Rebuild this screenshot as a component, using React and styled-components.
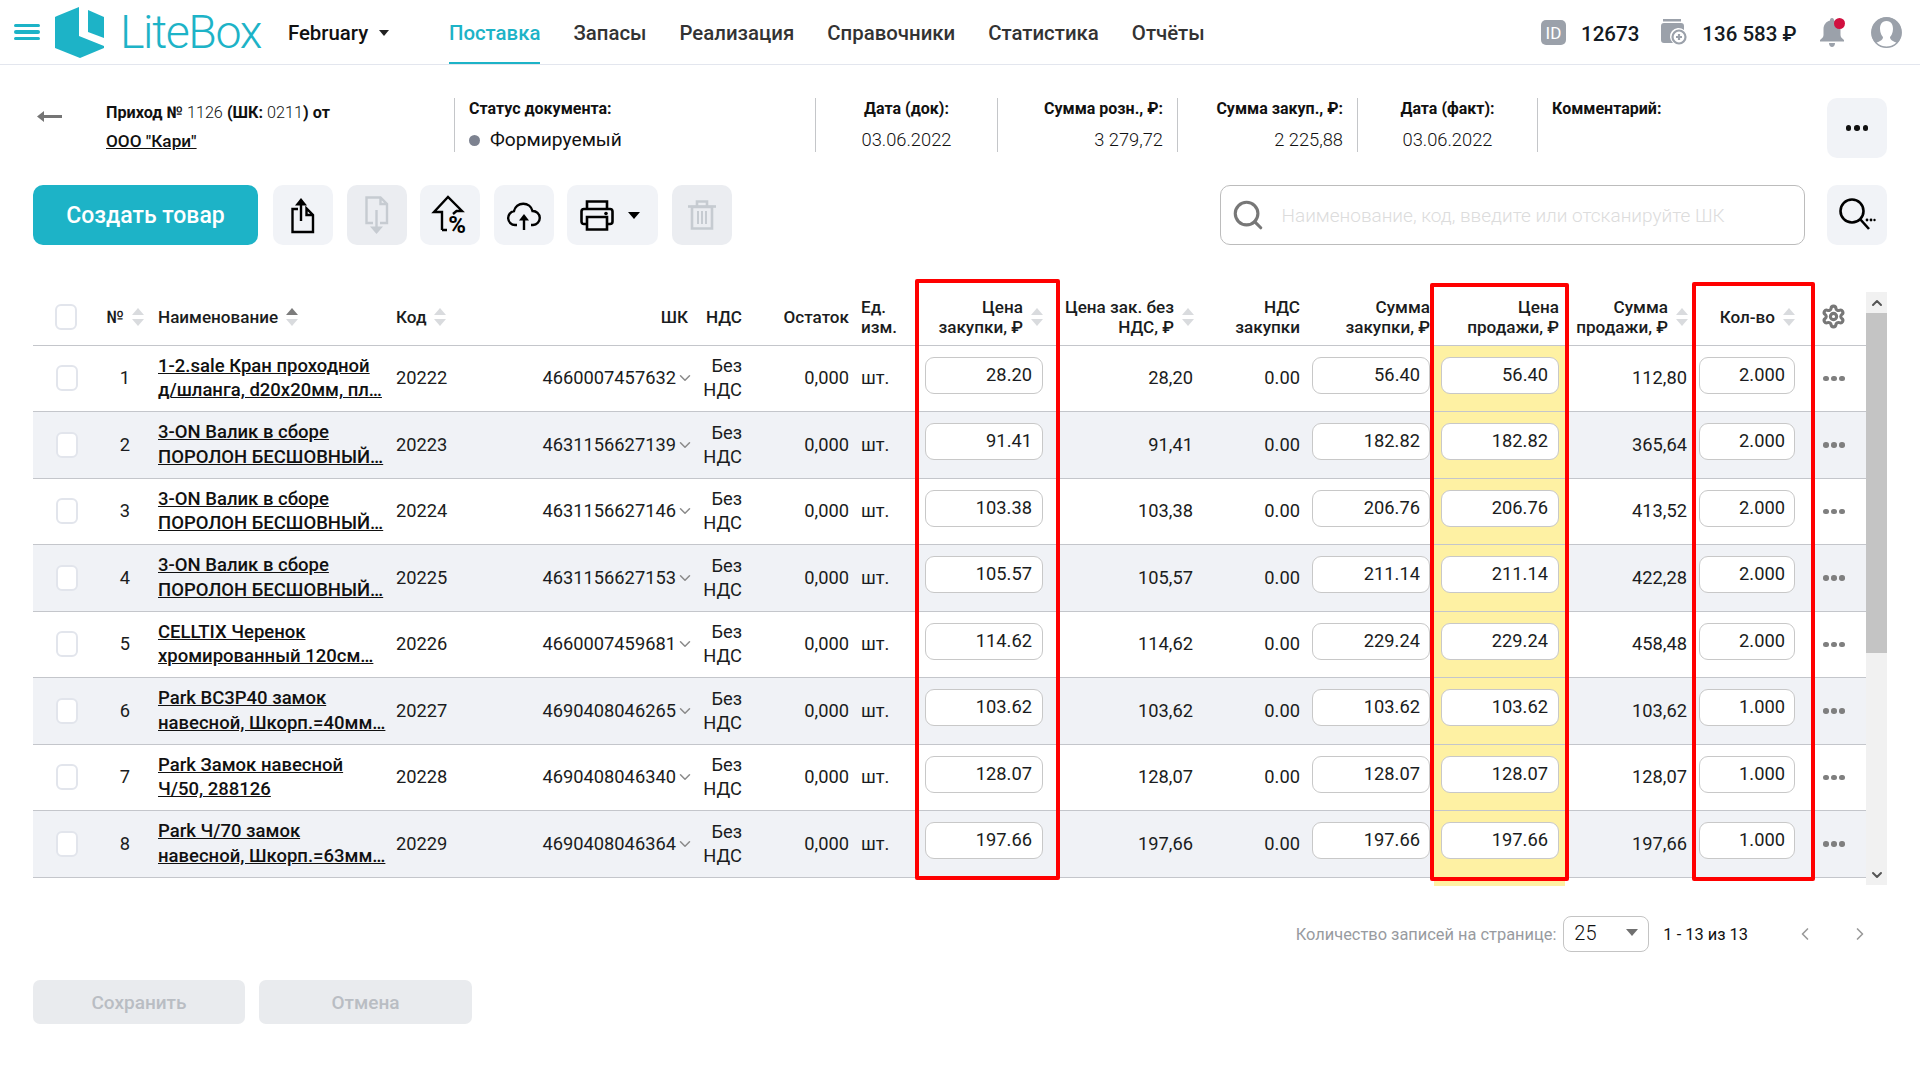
import React from 'react';
import styled, { createGlobalStyle } from 'styled-components';
import { Settings, ChevronDown, ChevronLeft, ChevronRight, ChevronUp, Search } from 'lucide-react';

const GlobalStyle = createGlobalStyle`
  * { box-sizing: border-box; }
  html, body { margin: 0; padding: 0; background: #fff; }
  body { font-family: Roboto, 'Noto Sans', sans-serif; color: #111; }
`;

const COLUMNS = '51px 66px 246px 124px 172px 50px 107px 66px 138px 142px 105px 134px 131px 127px 123px 51px';

const Page = styled.div`
  width: 1920px;
  height: 1080px;
  overflow: hidden;
  background: #fff;
`;

const TopBar = styled.header`
  height: 65px;
  display: flex;
  align-items: center;
  border-bottom: 1px solid #e3e6ee;
  padding-left: 14px;
`;

const Burger = styled.div`
  width: 26px;
  display: flex;
  flex-direction: column;
  gap: 3px;
  margin-right: 15px;

  span {
    height: 3.4px;
    border-radius: 2px;
    background: #1db3c7;
  }
`;

const LogoText = styled.span`
  font-family: Roboto, sans-serif;
  font-weight: 300;
  font-size: 46.5px;
  letter-spacing: -1.4px;
  color: #1db3c7;
  margin-left: 16px;
  margin-right: 27px;
  line-height: 1;
`;

const Account = styled.div`
  display: flex;
  align-items: center;
  gap: 11px;
  width: 161px;
  font-size: 20.4px;
  font-weight: 500;
  padding-top: 1px;
`;

const Caret = styled.span`
  width: 0;
  height: 0;
  border-left: ${(p) => p.$size}px solid transparent;
  border-right: ${(p) => p.$size}px solid transparent;
  border-top: ${(p) => p.$size + 1}px solid ${(p) => p.$color || '#222'};
`;

const Nav = styled.nav`
  display: flex;
  height: 64px;
  gap: 33px;
`;

const NavItem = styled.a`
  display: flex;
  align-items: center;
  font-size: 20.4px;
  font-weight: 500;
  color: ${(p) => (p.$active ? '#1db3c7' : '#333')};
  border-bottom: 2.5px solid ${(p) => (p.$active ? '#1db3c7' : 'transparent')};
  padding-top: 4px;
`;

const TopRight = styled.div`
  margin-left: auto;
  display: flex;
  align-items: center;
  padding-right: 18px;
  font-size: 20.5px;
  font-weight: 500;
  color: #141a22;
`;

const Figure = styled.span`
  margin-left: 15px;
  margin-right: ${(p) => p.$after}px;
  padding-top: 3px;
  white-space: nowrap;
`;

const BellWrap = styled.span`
  position: relative;
  display: flex;
  margin-right: 26px;
`;

const BellDot = styled.span`
  position: absolute;
  right: 0;
  top: 0;
  width: 11px;
  height: 11px;
  border-radius: 50%;
  background: #d1103f;
`;

const Main = styled.main`
  padding: 33px 33px 0;
`;

const MetaRow = styled.section`
  display: flex;
  height: 60px;
`;

const BackCell = styled.div`
  width: 73px;
  height: 54px;
  padding: 4px 0 0 4px;
  display: flex;
  align-items: center;
  padding-bottom: 22px;
`;

const DocTitle = styled.div`
  width: 348px;
  height: 54px;
  font-size: 16.2px;
  font-weight: 700;
  line-height: 28px;
  padding-top: 1px;

  b { font-weight: 300; }
  a { text-decoration: underline; font-size: 17.2px; font-weight: 500; }
`;

const MetaCell = styled.div`
  width: ${(p) => p.$width}px;
  height: 54px;
  border-left: 1px solid #c4c6c9;
  padding: 0 14px;
  text-align: ${(p) => p.$align || 'left'};
`;

const MetaLabel = styled.div`
  font-size: 16px;
  font-weight: 700;
  line-height: 22px;
`;

const MetaValue = styled.div`
  font-size: 18.3px;
  font-weight: 300;
  line-height: 24px;
  margin-top: 8px;
  white-space: nowrap;
  display: flex;
  align-items: center;
  justify-content: ${(p) => p.$justify || 'flex-start'};
`;

const StatusDot = styled.span`
  width: 11px;
  height: 11px;
  border-radius: 50%;
  background: #7d8290;
  margin-right: 10px;
`;

const StatusText = styled.span`
  font-size: 19.2px;
  font-weight: 400;
`;

const SquareButton = styled.button`
  width: ${(p) => p.$width || 60}px;
  height: 60px;
  border: 0;
  border-radius: 10px;
  padding: 0 ${(p) => p.$pr || 0}px 0 0;
  background: ${(p) => (p.disabled ? '#ebedf1' : '#f1f3f7')};
  display: flex;
  align-items: center;
  justify-content: center;
  gap: ${(p) => p.$gap || 0}px;
  flex-shrink: 0;
`;

const MoreButton = styled(SquareButton)`
  margin-left: auto;
`;

const Dots = styled.span`
  display: flex;
  gap: ${(p) => p.$gap}px;

  i {
    width: ${(p) => p.$dot}px;
    height: ${(p) => p.$dot}px;
    border-radius: 50%;
    background: ${(p) => p.$color};
  }
`;

const Toolbar = styled.section`
  display: flex;
  align-items: center;
  gap: 13.5px;
  margin-top: 27px;
`;

const CreateButton = styled.button`
  width: 225px;
  height: 60px;
  margin-right: 1.5px;
  border: 0;
  border-radius: 10px;
  background: #1db3c7;
  color: #fff;
  font-family: inherit;
  font-size: 23px;
  font-weight: 500;
`;

const SearchBox = styled.label`
  width: 585px;
  height: 60px;
  margin-left: auto;
  margin-right: 9px;
  border: 1px solid #bcbcbc;
  border-radius: 10px;
  display: flex;
  align-items: center;
  padding-left: 10px;
  gap: 15px;

  input {
    flex: 1;
    border: 0;
    outline: 0;
    background: transparent;
    font-family: inherit;
    font-size: 19px;
    font-weight: 300;
  }

  input::placeholder {
    color: #dcdcdc;
    opacity: 1;
  }
`;

const TableArea = styled.section`
  position: relative;
  display: flex;
  align-items: flex-start;
  height: 602px;
  margin-top: 38px;
`;

const Table = styled.div`
  width: 1833px;
`;

const HeadRow = styled.div`
  display: grid;
  grid-template-columns: ${COLUMNS};
  height: 62.5px;
  border-bottom: 1.5px solid #c4c6cb;
`;

const HeadCell = styled.div`
  display: flex;
  align-items: center;
  justify-content: ${(p) => (p.$left ? 'flex-start' : 'flex-end')};
  padding: 6px ${(p) => p.$pr || 0}px 0 ${(p) => p.$pl || 0}px;
  font-size: 17.1px;
  font-weight: 500;
  line-height: 20px;
  text-align: ${(p) => (p.$left ? 'left' : 'right')};
  white-space: nowrap;
  color: #1a1c20;
`;

const Sort = styled.span`
  display: flex;
  flex-direction: column;
  gap: 4px;
  margin-left: 8px;
  flex-shrink: 0;
`;

const SortUp = styled.i`
  width: 0;
  height: 0;
  border-left: 6.5px solid transparent;
  border-right: 6.5px solid transparent;
  border-bottom: 7px solid ${(p) => (p.$active ? '#7c7c7c' : '#d9dbde')};
`;

const SortDown = styled(SortUp)`
  border-bottom: 0;
  border-top: 7px solid #d9dbde;
`;

const Row = styled.div`
  display: grid;
  grid-template-columns: ${COLUMNS};
  height: 66.5px;
  border-bottom: 1.5px solid #c4c6cb;
  background: ${(p) => (p.$even ? '#f0f2f6' : '#fff')};
`;

const Cell = styled.div`
  position: relative;
  display: flex;
  align-items: ${(p) => (p.$top ? 'flex-start' : 'center')};
  justify-content: ${(p) => (p.$left ? 'flex-start' : 'flex-end')};
  padding: ${(p) => (p.$top ? 11 : 0)}px ${(p) => p.$pr || 0}px 0 ${(p) => p.$pl || 0}px;
  font-size: 18.3px;
  line-height: 24px;
  white-space: nowrap;
  text-align: ${(p) => (p.$left ? 'left' : 'right')};
  color: #1a1c20;
`;

const YellowCell = styled(Cell)`
  background: #fef1a3;

  &::after {
    content: '';
    display: ${(p) => (p.$last ? 'block' : 'none')};
    position: absolute;
    left: 0;
    right: 0;
    top: 100%;
    height: 9px;
    background: #fef1a3;
  }
`;

const CheckBox = styled.span`
  width: 22px;
  height: 26px;
  border: 2px solid #e2e5ec;
  border-radius: 6px;
  background: #fff;
`;

const NameLink = styled.a`
  font-size: 18.5px;
  font-weight: 500;
  line-height: 24.5px;
  text-decoration: underline;
  color: #111;
`;

const BarChevron = styled(ChevronDown)`
  flex-shrink: 0;
  margin-right: -2px;
`;

const AmountInput = styled.input`
  width: ${(p) => p.$width}px;
  height: 37px;
  border: 1px solid #c8c8c8;
  border-radius: 9px;
  background: #fff;
  padding: 0 ${(p) => p.$pad || 10}px 2px 0;
  text-align: right;
  font-family: inherit;
  font-size: 18.3px;
  color: #1a1c20;
  outline: 0;
`;

const Scrollbar = styled.div`
  width: 21px;
  height: 593px;
  margin-top: 9px;
  display: flex;
  flex-direction: column;
  background: #f1f1f1;
`;

const ScrollArrow = styled.span`
  height: 21px;
  display: flex;
  align-items: center;
  justify-content: center;
  color: #555;
`;

const ScrollThumb = styled.span`
  height: 340px;
  background: #c4c4c4;
`;

const ScrollSpace = styled.span`
  flex: 1;
`;

const RedBox = styled.div`
  position: absolute;
  left: ${(p) => p.$left}px;
  top: ${(p) => p.$top}px;
  width: ${(p) => p.$width}px;
  height: ${(p) => p.$height}px;
  border: 4.5px solid #ff0000;
  border-radius: 2px;
  pointer-events: none;
`;

const Pagination = styled.div`
  display: flex;
  align-items: center;
  justify-content: flex-end;
  height: 36px;
  margin-top: 31px;
  padding-right: 17px;
`;

const PageLabel = styled.span`
  font-size: 16.4px;
  font-weight: 400;
  color: #989ba0;
  margin-right: 7px;
`;

const PageSelect = styled.div`
  width: 86px;
  height: 36px;
  border: 1px solid #c4c4c4;
  border-radius: 8px;
  display: flex;
  align-items: center;
  justify-content: space-between;
  padding: 0 10px 3px 10px;
  font-size: 20px;
  font-weight: 300;
  margin-right: 14px;
`;

const PageRange = styled.span`
  font-size: 16.4px;
  margin-right: 47px;
`;

const PageArrows = styled.span`
  display: flex;
  gap: 35px;
  color: #9a9a9a;
`;

const Footer = styled.div`
  display: flex;
  gap: 14px;
  margin-top: 28px;
`;

const GhostButton = styled.button`
  width: ${(p) => p.$width}px;
  height: 44px;
  border: 0;
  border-radius: 7px;
  background: #e9ebee;
  color: #b9bdc3;
  font-family: inherit;
  font-size: 19px;
  font-weight: 500;
`;

const rows = [
  { name: ['1-2.sale Кран проходной', 'д/шланга, d20х20мм, пл…'], code: '20222', bar: '4660007457632', buy: '28.20', net: '28,20', sum: '56.40', sell: '56.40', total: '112,80', qty: '2.000' },
  { name: ['3-ON Валик в сборе', 'ПОРОЛОН БЕСШОВНЫЙ…'], code: '20223', bar: '4631156627139', buy: '91.41', net: '91,41', sum: '182.82', sell: '182.82', total: '365,64', qty: '2.000' },
  { name: ['3-ON Валик в сборе', 'ПОРОЛОН БЕСШОВНЫЙ…'], code: '20224', bar: '4631156627146', buy: '103.38', net: '103,38', sum: '206.76', sell: '206.76', total: '413,52', qty: '2.000' },
  { name: ['3-ON Валик в сборе', 'ПОРОЛОН БЕСШОВНЫЙ…'], code: '20225', bar: '4631156627153', buy: '105.57', net: '105,57', sum: '211.14', sell: '211.14', total: '422,28', qty: '2.000' },
  { name: ['CELLTIX Черенок', 'хромированный 120см…'], code: '20226', bar: '4660007459681', buy: '114.62', net: '114,62', sum: '229.24', sell: '229.24', total: '458,48', qty: '2.000' },
  { name: ['Park ВС3Р40 замок', 'навесной, Шкорп.=40мм…'], code: '20227', bar: '4690408046265', buy: '103.62', net: '103,62', sum: '103.62', sell: '103.62', total: '103,62', qty: '1.000' },
  { name: ['Park Замок навесной', 'Ч/50, 288126'], code: '20228', bar: '4690408046340', buy: '128.07', net: '128,07', sum: '128.07', sell: '128.07', total: '128,07', qty: '1.000' },
  { name: ['Park Ч/70 замок', 'навесной, Шкорп.=63мм…'], code: '20229', bar: '4690408046364', buy: '197.66', net: '197,66', sum: '197.66', sell: '197.66', total: '197,66', qty: '1.000' },
];

const navItems = ['Поставка', 'Запасы', 'Реализация', 'Справочники', 'Статистика', 'Отчёты'];

const LogoMark = () => (
  <svg width="49" height="51" viewBox="0 0 49 51" fill="#1db3c7">
    <path d="M24 0L2 9 0 10V41L25 51 49 41V39L24 29Z" />
    <path d="M33 3L49 10V31L33 25Z" />
  </svg>
);

const IdIcon = () => (
  <svg width="25" height="25" viewBox="0 0 25 25">
    <rect width="25" height="25" rx="5" fill="#9ba1aa" />
    <text x="12.5" y="19" textAnchor="middle" fontFamily="Roboto" fontSize="17" fontWeight="400" fill="#fff">ID</text>
  </svg>
);

const WalletIcon = () => (
  <svg width="26" height="26" viewBox="0 0 26 26">
    <path d="M2 0H20V2.5H2Z" fill="#9ba1aa" />
    <path d="M3 4H20Q23 4 23 7V11A8 8 0 0 0 12 24H3Q0 24 0 21V7Q0 4 3 4Z" fill="#9ba1aa" />
    <circle cx="18" cy="18" r="6.5" fill="none" stroke="#9ba1aa" strokeWidth="2.2" />
    <path d="M15 18H21M18 15V21" stroke="#9ba1aa" strokeWidth="2.2" />
  </svg>
);

const BellIcon = () => (
  <svg width="26" height="29" viewBox="0 0 26 29" fill="#9ba1aa">
    <path d="M13 0C11.5 0 11 1 11 2.5C7 3.5 4.5 7 4.5 11V17C4.5 19 3 20.5 1 22V23.5H25V22C23 20.5 21.5 19 21.5 17V11C21.5 7 19 3.5 15 2.5C15 1 14.5 0 13 0Z" />
    <path d="M10 25H16C16 27.5 14.5 29 13 29S10 27.5 10 25Z" />
  </svg>
);

const AvatarIcon = () => (
  <svg width="31" height="31" viewBox="0 0 31 31">
    <ellipse cx="15.5" cy="15.5" rx="15" ry="15" fill="#9ba1aa" />
    <path d="M15.5 4C10.5 4 9 8 9 12C9 16 11 19 12 20C12 23 9 24 5 26C8 29 12 30 15.5 30S23 29 26 26C22 24 19 23 19 20C20 19 22 16 22 12C22 8 20.5 4 15.5 4Z" fill="#fff" />
    <circle cx="15.5" cy="15.5" r="14.7" fill="none" stroke="#9ba1aa" strokeWidth="1.4" />
  </svg>
);

const BackArrow = () => (
  <svg width="25" height="11" viewBox="0 0 25 11" fill="#757575">
    <path d="M0 5.5L7 0V4H25V7H7V11Z" />
  </svg>
);

const ExportIcon = () => (
  <svg width="24" height="37" viewBox="0 0 24 37" fill="none" stroke="#000" strokeWidth="2.4">
    <path d="M7 12H1.5V35H22V18L15.5 11.5V18H22" />
    <path d="M10 6V24" />
    <path d="M10 1L16 8.5H4Z" fill="#000" stroke="none" />
  </svg>
);

const ImportIcon = () => (
  <svg width="24" height="38" viewBox="0 0 24 38" fill="none" stroke="#c6cbd1" strokeWidth="2.4">
    <path d="M8 27H1.5V1.5H15.5L22 8V27H15M15.5 1.5V8H22" />
    <path d="M11.5 14V32" />
    <path d="M11.5 38L5 30.5H18Z" fill="#c6cbd1" stroke="none" />
  </svg>
);

const PercentIcon = () => (
  <svg width="38" height="52" viewBox="0 -5 38 52" fill="none" stroke="#000" strokeWidth="2.4">
    <path d="M11 36H16M11 36V18H3L17 3L31 17H25.5L22 20" />
    <text x="26" y="39" textAnchor="middle" fontFamily="Roboto" fontWeight="700" fontSize="24" fill="#000" stroke="none">%</text>
  </svg>
);

const CloudIcon = () => (
  <svg width="36" height="29" viewBox="0 0 36 29" fill="none" stroke="#000" strokeWidth="2.4">
    <path d="M11 24H9A7 7 0 0 1 8 10.1A9.5 9.5 0 0 1 26.5 10A7 7 0 0 1 27 24H25" />
    <path d="M18 16V29" />
    <path d="M18 13L23 19.5H13Z" fill="#000" stroke="none" />
  </svg>
);

const PrinterIcon = () => (
  <svg width="34" height="31" viewBox="0 0 34 31" fill="none" stroke="#000" strokeWidth="2.6">
    <path d="M7 9V1.5H27V9" />
    <path d="M7 24H4Q1.5 24 1.5 21.5V11.5Q1.5 9 4 9H30Q32.5 9 32.5 11.5V21.5Q32.5 24 30 24H27" />
    <path d="M7 17H27V29.5H7Z" />
    <circle cx="26" cy="13.5" r="1.8" fill="#000" stroke="none" />
  </svg>
);

const TrashIcon = () => (
  <svg width="28" height="30" viewBox="0 0 28 30" fill="none" stroke="#c6cbd1" strokeWidth="2.6">
    <path d="M0 6.5H28" />
    <path d="M9 6V1.5H19V6" />
    <path d="M4 7H24V28.5H4Z" />
    <path d="M10 11V24M14 11V24M18 11V24" strokeWidth="2" />
  </svg>
);

const SearchMore = () => (
  <svg width="37" height="34" viewBox="0 0 37 34" fill="none" stroke="#000" strokeWidth="2.6">
    <circle cx="13" cy="13" r="11.5" />
    <path d="M21 21L30 31" />
    <circle cx="28" cy="22" r="1.4" fill="#000" stroke="none" />
    <circle cx="32" cy="22" r="1.4" fill="#000" stroke="none" />
    <circle cx="35.5" cy="22" r="1.2" fill="#000" stroke="none" />
  </svg>
);

const SortMark = ({ active }) => (
  <Sort>
    <SortUp $active={active} />
    <SortDown />
  </Sort>
);

const App = () => (
  <Page>
    <GlobalStyle />
    <TopBar>
      <Burger><span /><span /><span /></Burger>
      <LogoMark />
      <LogoText>LiteBox</LogoText>
      <Account>February <Caret $size={5} /></Account>
      <Nav>
        {navItems.map((item, i) => (
          <NavItem key={item} $active={i === 0}>{item}</NavItem>
        ))}
      </Nav>
      <TopRight>
        <IdIcon />
        <Figure $after={22}>12673</Figure>
        <WalletIcon />
        <Figure $after={22.5}>136 583 ₽</Figure>
        <BellWrap>
          <BellIcon />
          <BellDot />
        </BellWrap>
        <AvatarIcon />
      </TopRight>
    </TopBar>

    <Main>
      <MetaRow>
        <BackCell><BackArrow /></BackCell>
        <DocTitle>
          Приход № <b>1126</b> (ШК: <b>0211</b>) от<br />
          <a>ООО "Кари"</a>
        </DocTitle>
        <MetaCell $width={361}>
          <MetaLabel>Статус документа:</MetaLabel>
          <MetaValue><StatusDot /><StatusText>Формируемый</StatusText></MetaValue>
        </MetaCell>
        <MetaCell $width={182} $align="center">
          <MetaLabel>Дата (док):</MetaLabel>
          <MetaValue $justify="center">03.06.2022</MetaValue>
        </MetaCell>
        <MetaCell $width={180} $align="right">
          <MetaLabel>Сумма розн., ₽:</MetaLabel>
          <MetaValue $justify="flex-end">3 279,72</MetaValue>
        </MetaCell>
        <MetaCell $width={180} $align="right">
          <MetaLabel>Сумма закуп., ₽:</MetaLabel>
          <MetaValue $justify="flex-end">2 225,88</MetaValue>
        </MetaCell>
        <MetaCell $width={180} $align="center">
          <MetaLabel>Дата (факт):</MetaLabel>
          <MetaValue $justify="center">03.06.2022</MetaValue>
        </MetaCell>
        <MetaCell $width={200}>
          <MetaLabel>Комментарий:</MetaLabel>
        </MetaCell>
        <MoreButton>
          <Dots $gap={3} $dot={5.5} $color="#111"><i /><i /><i /></Dots>
        </MoreButton>
      </MetaRow>

      <Toolbar>
        <CreateButton>Создать товар</CreateButton>
        <SquareButton><ExportIcon /></SquareButton>
        <SquareButton disabled><ImportIcon /></SquareButton>
        <SquareButton><PercentIcon /></SquareButton>
        <SquareButton><CloudIcon /></SquareButton>
        <SquareButton $width={91} $gap={14} $pr={5}>
          <PrinterIcon />
          <Caret $size={6.5} $color="#000" />
        </SquareButton>
        <SquareButton disabled><TrashIcon /></SquareButton>
        <SearchBox>
          <Search size={34} strokeWidth={2.2} color="#777" />
          <input placeholder="Наименование, код, введите или отсканируйте ШК" />
        </SearchBox>
        <SquareButton><SearchMore /></SquareButton>
      </Toolbar>

      <TableArea>
        <Table>
          <HeadRow>
            <HeadCell $left $pl={22}><CheckBox /></HeadCell>
            <HeadCell $pr={6}>№<SortMark /></HeadCell>
            <HeadCell $left $pl={8}>Наименование<SortMark active /></HeadCell>
            <HeadCell $left>Код<SortMark /></HeadCell>
            <HeadCell $pr={4}>ШК</HeadCell>
            <HeadCell>НДС</HeadCell>
            <HeadCell>Остаток</HeadCell>
            <HeadCell $left $pl={12}><span>Ед.<br />изм.</span></HeadCell>
            <HeadCell $pr={10}><span>Цена<br />закупки, ₽</span><SortMark /></HeadCell>
            <HeadCell $pr={1}><span>Цена зак. без<br />НДС, ₽</span><SortMark /></HeadCell>
            <HeadCell><span>НДС<br />закупки</span></HeadCell>
            <HeadCell $pr={4}><span>Сумма<br />закупки, ₽</span></HeadCell>
            <HeadCell $pr={6}><span>Цена<br />продажи, ₽</span></HeadCell>
            <HeadCell $pr={4}><span>Сумма<br />продажи, ₽</span><SortMark /></HeadCell>
            <HeadCell $pr={20}>Кол-во<SortMark /></HeadCell>
            <HeadCell $left $pl={6}><Settings size={25} strokeWidth={3} color="#777" /></HeadCell>
          </HeadRow>
          {rows.map((row, i) => (
            <Row key={row.code} $even={i % 2 === 1}>
              <Cell $left $pl={23}><CheckBox /></Cell>
              <Cell $pr={20}>{i + 1}</Cell>
              <Cell $left $pl={8}>
                <NameLink>{row.name[0]}<br />{row.name[1]}</NameLink>
              </Cell>
              <Cell $left>{row.code}</Cell>
              <Cell $pr={0}>
                {row.bar}
                <BarChevron size={18} strokeWidth={2} color="#8a8a8a" />
              </Cell>
              <Cell>Без<br />НДС</Cell>
              <Cell>0,000</Cell>
              <Cell $left $pl={12}>шт.</Cell>
              <Cell $top $left $pl={10}><AmountInput $width={118} defaultValue={row.buy} readOnly /></Cell>
              <Cell $pr={2}>{row.net}</Cell>
              <Cell>0.00</Cell>
              <Cell $top $pr={4}><AmountInput $width={118} $pad={9} defaultValue={row.sum} readOnly /></Cell>
              <YellowCell $top $left $pl={7} $last={i === rows.length - 1}>
                <AmountInput $width={118} defaultValue={row.sell} readOnly />
              </YellowCell>
              <Cell $pr={5}>{row.total}</Cell>
              <Cell $top $left $pl={7}><AmountInput $width={96} $pad={9} defaultValue={row.qty} readOnly /></Cell>
              <Cell $left $pl={8}>
                <Dots $gap={2.5} $dot={5.5} $color="#7f7f7f"><i /><i /><i /></Dots>
              </Cell>
            </Row>
          ))}
        </Table>
        <Scrollbar>
          <ScrollArrow><ChevronUp size={16} strokeWidth={3} /></ScrollArrow>
          <ScrollThumb />
          <ScrollSpace />
          <ScrollArrow><ChevronDown size={16} strokeWidth={3} /></ScrollArrow>
        </Scrollbar>
        <RedBox $left={882} $top={-4} $width={145} $height={601} />
        <RedBox $left={1397} $top={0} $width={139} $height={598} />
        <RedBox $left={1659} $top={-1} $width={123} $height={599} />
      </TableArea>

      <Pagination>
        <PageLabel>Количество записей на странице:</PageLabel>
        <PageSelect>25 <Caret $size={6} $color="#707070" /></PageSelect>
        <PageRange>1 - 13 из 13</PageRange>
        <PageArrows>
          <ChevronLeft size={20} strokeWidth={2} />
          <ChevronRight size={20} strokeWidth={2} />
        </PageArrows>
      </Pagination>

      <Footer>
        <GhostButton $width={212} disabled>Сохранить</GhostButton>
        <GhostButton $width={213} disabled>Отмена</GhostButton>
      </Footer>
    </Main>
  </Page>
);

export default App;
